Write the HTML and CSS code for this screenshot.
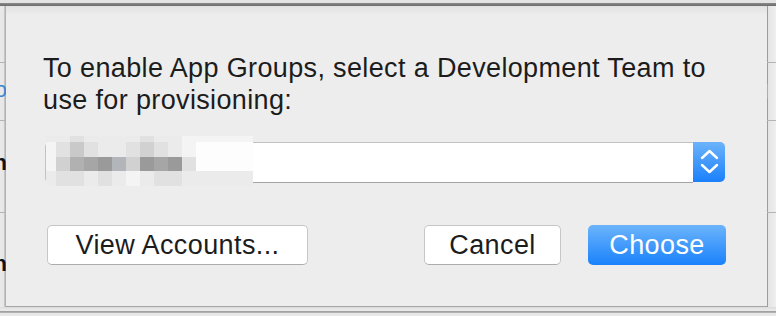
FILE: index.html
```html
<!DOCTYPE html>
<html>
<head>
    <meta http-equiv="Content-Type" content="text/html; charset=utf-8" />
    <title>Development Team</title>
    <link rel="stylesheet" href="styles.css">
</head>

<body>
<div class="toolbar"></div>
<div class="stage">
    <div class="win_left">
        <div class="row r1"></div>
        <div class="row r2"><span class="peek blue">Info</span></div>
        <div class="row r3"><span class="peek dark">Path</span></div>
        <div class="row r4"><span class="peek dark">Sign</span></div>
    </div>
    <div class="sheet">
        <p class="msg">To enable App Groups, select a Development Team to use for provisioning:</p>
        <div class="popup">
            <div class="field"></div>
            <div class="stepper">
                <svg width="32" height="40" viewBox="0 0 32 40">
                    <polyline points="9,16 16.5,9 24,16" fill="none" stroke="#fff" stroke-width="2.4" stroke-linecap="round" stroke-linejoin="round"/>
                    <polyline points="9,23 16.5,30 24,23" fill="none" stroke="#fff" stroke-width="2.4" stroke-linecap="round" stroke-linejoin="round"/>
                </svg>
            </div>
            <div class="mosaic">
                <i class="s2"></i><i class="s2"></i><i class="s3"></i><i class="s2"></i><i class="s2"></i><i class="s2"></i><i class="s2"></i><i class="s3"></i><i class="s2"></i><i class="s2"></i><i class="s1"></i><i class="s1"></i>
                <i class="s1"></i><i class="s3"></i><i class="s5"></i><i class="s3"></i><i class="s2"></i><i class="s2"></i><i class="s3"></i><i class="s4"></i><i class="s3"></i><i class="s2"></i><i class="s1"></i><i class="s0"></i>
                <i class="s1"></i><i class="s4"></i><i class="s6"></i><i class="s7"></i><i class="s8"></i><i class="s6b"></i><i class="s4"></i><i class="s8"></i><i class="s7"></i><i class="s8"></i><i class="s3"></i><i class="s0"></i>
                <i class="s2"></i><i class="s3"></i><i class="s3"></i><i class="s2"></i><i class="s3"></i><i class="s2"></i><i class="s1"></i><i class="s2"></i><i class="s3"></i><i class="s3"></i><i class="s2"></i><i class="s2"></i>
            </div>
        </div>
        <div class="actions">
            <a class="btn wide">View Accounts...</a>
            <span class="spacer"></span>
            <a class="btn">Cancel</a>
            <a class="btn primary">Choose</a>
        </div>
    </div>
    <div class="win_right">
        <div class="row r1"></div>
        <div class="row r2"><span class="tint"></span></div>
        <div class="row r3"></div>
        <div class="row r4"></div>
    </div>
</div>
<div class="foot"></div>
</body>
</html>
```

FILE: styles.css
```css
*{margin:0;padding:0;box-sizing:border-box;}
body{
    background:#ebebeb;
    font-family:"Liberation Sans",Arial,Helvetica,sans-serif;
    color:#1c1c1c;
    width:776px;
    height:316px;
    overflow:hidden;
}
.toolbar{
    height:6px;
    background:linear-gradient(#e3e3e3 0,#e3e3e3 3px,#8a8a8a 3px,#6a6a6a 6px);
}
.stage{
    display:flex;
    height:301px;
}

/* window behind the sheet */
.win_left,.win_right{
    display:flex;
    flex-direction:column;
    overflow:hidden;
}
.win_left{
    width:6px;
    background:linear-gradient(to right,#e9e9e9 0,#e6e6e6 4px,#cfcfcf 4px,#a9a9a9 6px);
}
.win_right{
    flex:1;
    background:linear-gradient(to right,#9c9c9c 0,#9c9c9c 1px,#e4e4e4 1px,#efefef 9px);
}
.row{
    border-bottom:1px solid #b4b4b4;
    display:flex;
    justify-content:flex-end;
    white-space:nowrap;
}
.r1{height:57px;}
.r2{height:58px;align-items:center;}
.r3{height:92px;align-items:center;}
.r4{flex:1;border-bottom:none;align-items:center;}
.peek{font-size:22px;font-weight:bold;margin-right:-1px;}
.blue{color:#3b86d0;font-weight:normal;margin-top:-4px;}
.r3 .dark{margin-top:-8px;}
.r4 .dark{margin-top:8px;}
.dark{color:#111;}
.tint{
    width:1px;
    height:15px;
    margin:0 auto 0 0;
    background:#8ab6d6;
}

/* the sheet */
.sheet{
    width:761px;
    background:linear-gradient(#e1e1e1 0,#ededed 9px);
    border-bottom:1px solid #a4a4a4;
    padding:46px 42px 0 39px;
}
.msg{
    font-size:27px;
    line-height:32px;
    margin-left:-2px;
    letter-spacing:0.36px;
}
.popup{
    position:relative;
    display:flex;
    height:41px;
    margin-top:26px;
}
.field{
    flex:1;
    background:#fff;
    border:1px solid #c2c2c2;
    border-bottom-color:#a3a3a3;
    border-right:none;
    border-radius:5px 0 0 5px;
}
.stepper{
    width:32px;
    height:40px;
    border-radius:0 5px 5px 0;
    background:linear-gradient(#6cb3fa,#1a80fb);
}
.stepper svg{display:block;}
.mosaic{
    position:absolute;
    left:1px;
    top:-6px;
    display:grid;
    grid-template-columns:10px repeat(10,14px) 57px;
    grid-template-rows:6px 15px 14px 15px;
}
.mosaic i{display:block;}
.s0{background:#fdfdfd;}
.s1{background:#f4f4f4;}
.s2{background:#ebebeb;}
.s3{background:#e1e1e1;}
.s4{background:#d1d1d1;}
.s5{background:#c9c9c9;}
.s6{background:#b1b1b1;}
.s6b{background:#b2b5ba;}
.s7{background:#a6a6a6;}
.s8{background:#9a9a9a;}

.actions{
    display:flex;
    margin:42px -1px 0 2px;
}
.spacer{flex:1;}
.btn{
    display:block;
    height:40px;
    line-height:38px;
    font-size:27px;
    letter-spacing:0.4px;
    text-align:center;
    background:#fff;
    border:1px solid #c6c6c6;
    border-bottom-color:#acacac;
    border-radius:5px;
    color:#1c1c1c;
    width:137px;
}
.wide{width:261px;}
.primary{
    margin-left:27px;
    width:138px;
    color:#fff;
    border:none;
    line-height:40px;
    background:linear-gradient(#6cb4fb,#1a82fb);
}
.foot{
    height:9px;
    background:linear-gradient(#dcdcdc 0,#e9e9e9 3px,#e9e9e9 4px,#9a9a9a 4px,#b8b8b8 6px,#e8e8e8 6px);
}
```
